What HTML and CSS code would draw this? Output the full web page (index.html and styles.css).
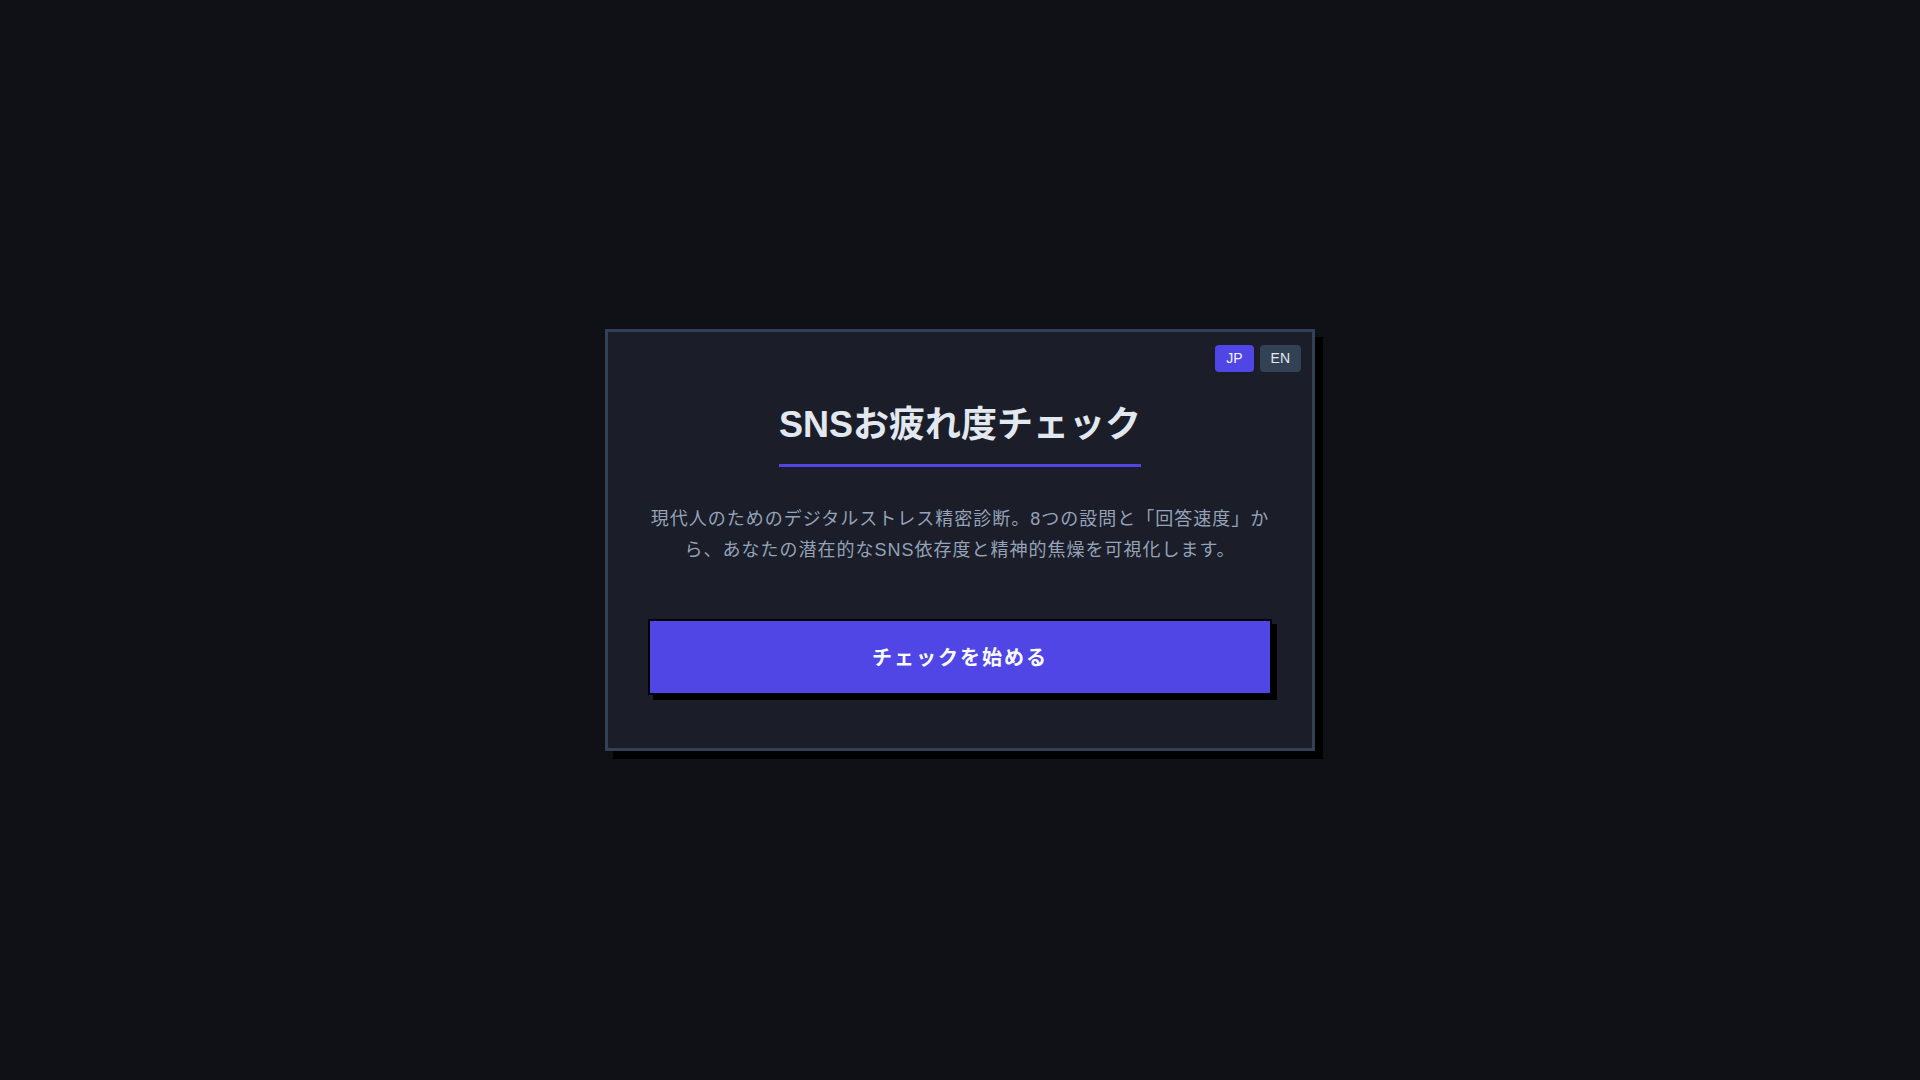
FILE: index.html
```html
<!DOCTYPE html>
<html lang="ja">
<head>
<meta charset="utf-8">
<title>SNSお疲れ度チェック</title>
<link rel="stylesheet" href="styles.css">
</head>
<body>
<main class="page">
  <section class="card">
    <div class="lang">
      <button class="lang-btn active">JP</button>
      <button class="lang-btn">EN</button>
    </div>
    <h1 class="title">SNSお疲れ度チェック</h1>
    <p class="desc">現代人のためのデジタルストレス精密診断。8つの設問と「回答速度」から、あなたの潜在的なSNS依存度と精神的焦燥を可視化します。</p>
    <button class="start">チェックを始める</button>
  </section>
</main>
</body>
</html>
```
FILE: styles.css
```css
* { box-sizing: border-box; }
html, body {
  margin: 0;
  padding: 0;
  height: 100%;
}
body {
  background: #0f1117;
  font-family: "Liberation Sans", "Noto Sans CJK JP", sans-serif;
}
.page {
  height: 100%;
  display: flex;
  align-items: center;
  justify-content: center;
}
.card {
  position: relative;
  width: 710px;
  height: 422px;
  background: #1b1d29;
  border: 3px solid #334155;
  box-shadow: 8px 8px 0 #000;
  padding: 71px 40px 40px;
  display: flex;
  flex-direction: column;
  align-items: center;
  text-align: center;
}
.lang {
  position: absolute;
  top: 13px;
  right: 11px;
  display: flex;
  gap: 6px;
}
.lang-btn {
  font-family: "Liberation Sans", "Noto Sans CJK JP", sans-serif;
  font-size: 14px;
  line-height: 17px;
  padding: 5px 11px;
  border: none;
  border-radius: 4px;
  background: #334155;
  color: #e2e8f0;
  margin: 0;
}
.lang-btn.active {
  background: #4f46e5;
  color: #f1f5f9;
}
.title {
  margin: 0;
  font-size: 36px;
  line-height: 44px;
  font-weight: 700;
  color: #e2e8f0;
  letter-spacing: 0;
  padding-bottom: 17px;
  border-bottom: 3px solid #4f46e5;
  display: inline-block;
  align-self: center;
}
.desc {
  margin: 37px 0 0;
  font-size: 18px;
  line-height: 30.6px;
  letter-spacing: 1px;
  color: #94a3b8;
  width: 624px;
}
.start {
  margin-top: 54px;
  width: 624px;
  height: 76px;
  background: #4f46e5;
  border: 2px solid #000;
  box-shadow: 5px 5px 0 #000;
  color: #f8fafc;
  font-family: "Liberation Sans", "Noto Sans CJK JP", sans-serif;
  font-size: 20px;
  font-weight: 700;
  letter-spacing: 2px;
  line-height: 32px;
  padding: 2px 0 0;
}
```
